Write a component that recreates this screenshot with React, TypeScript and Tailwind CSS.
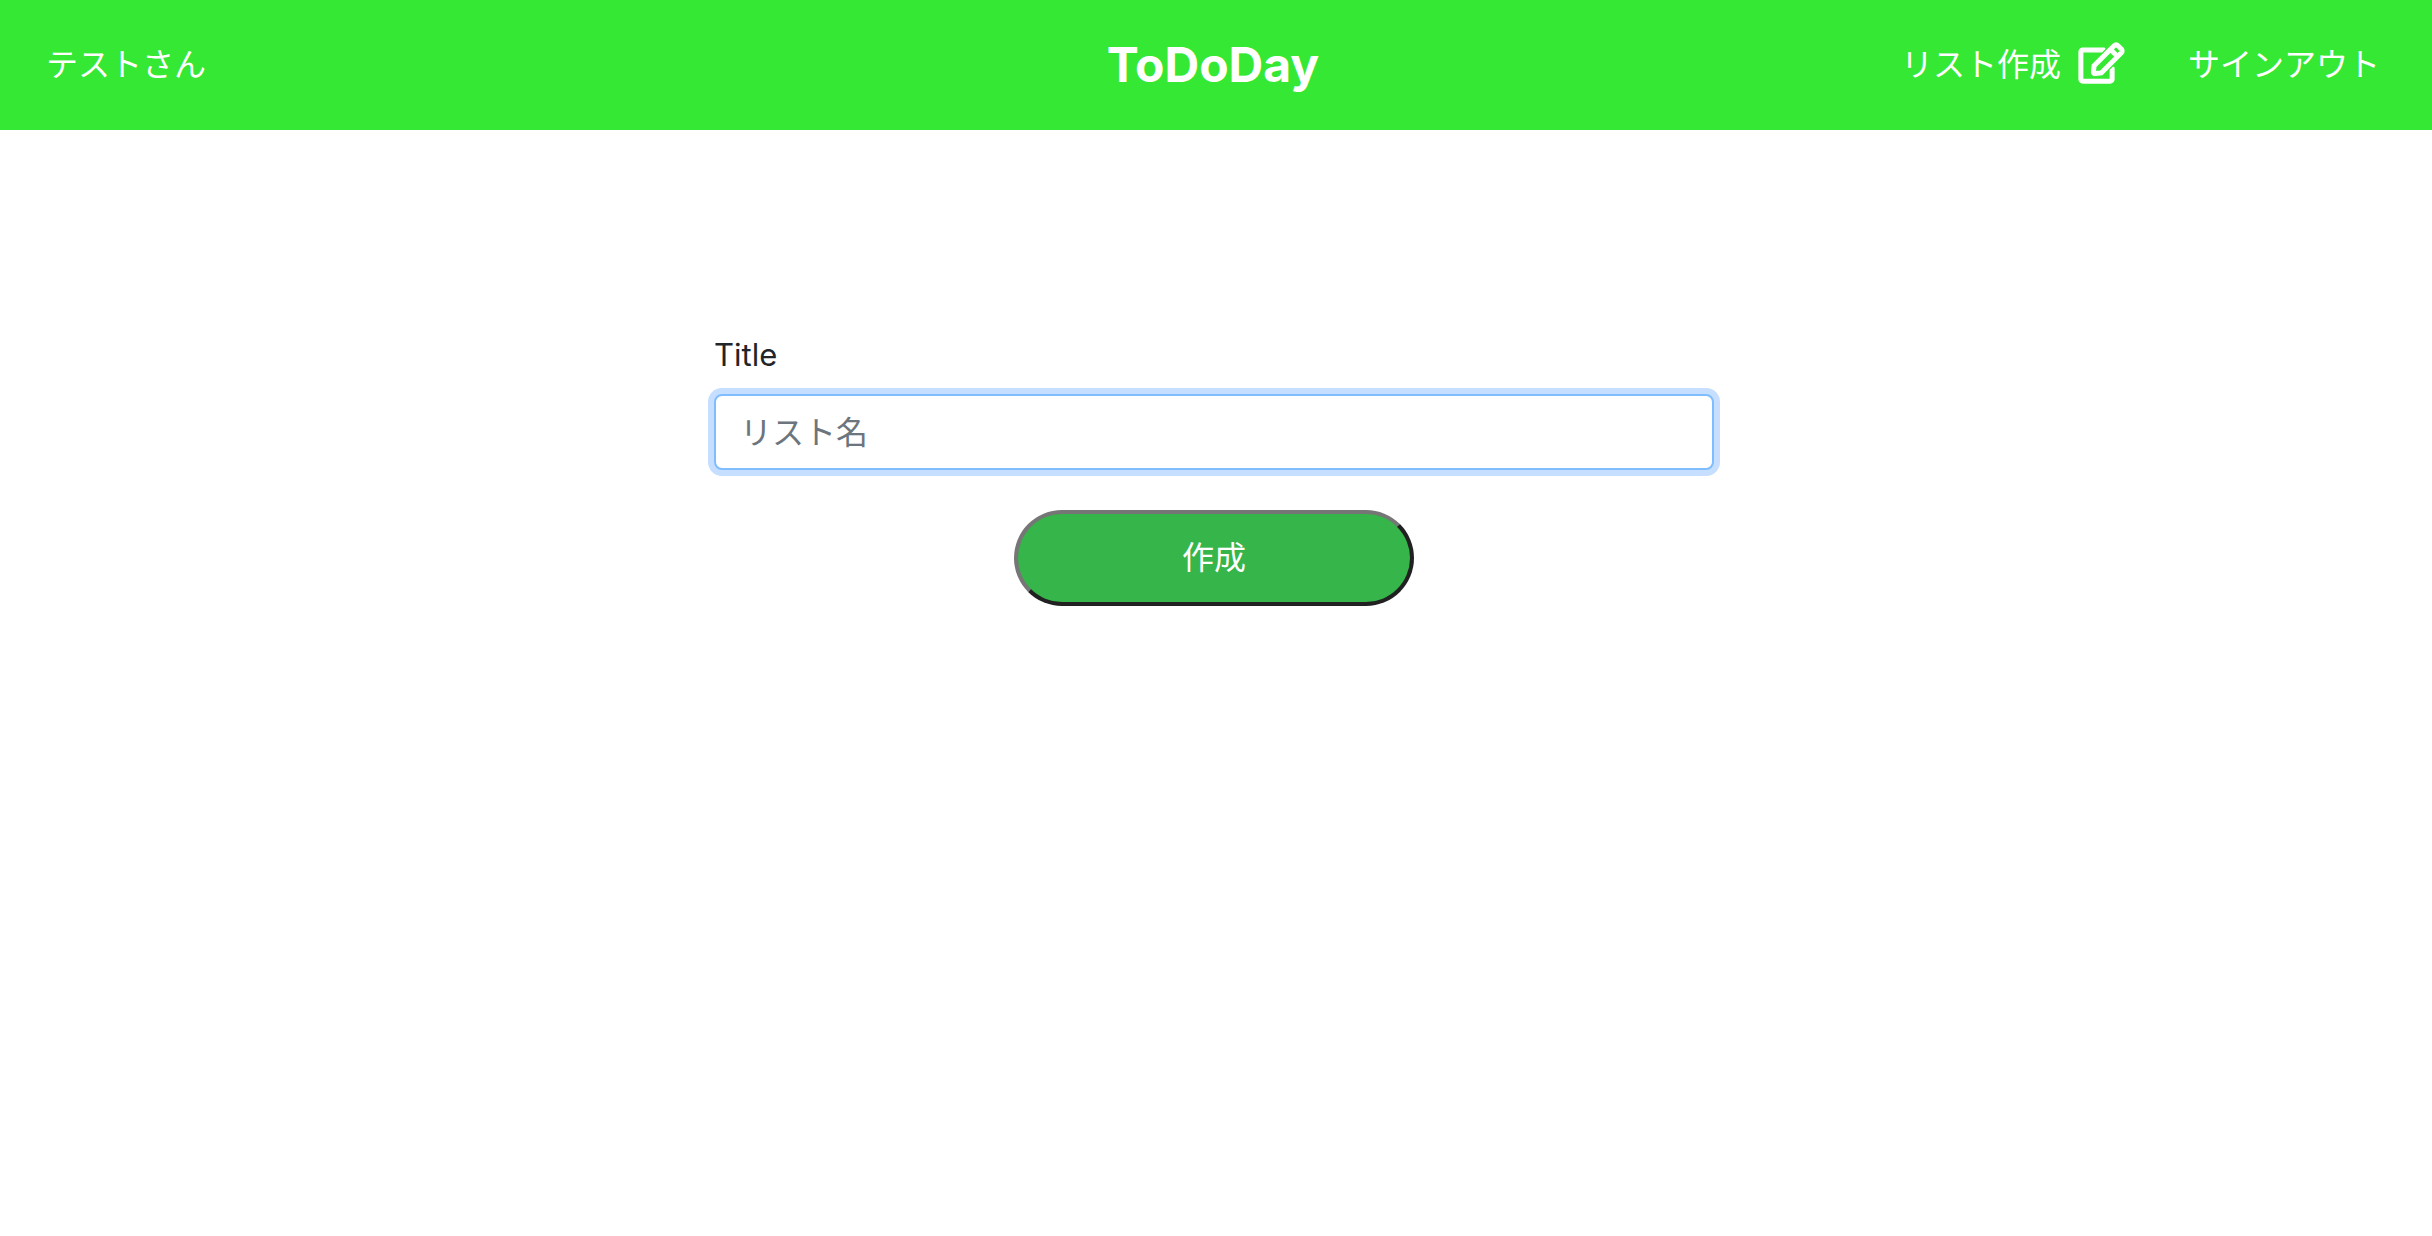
import React from "react";
import { FaRegEdit } from "react-icons/fa";

function Header() {
  return (
    <header className="grid h-[130px] grid-cols-[1fr_auto_1fr] items-center bg-[#35e833] pr-[52px] pl-[46px] text-[32px] leading-[48px] text-white">
      <a href="#" className="justify-self-start">テストさん</a>
      <h1 className="text-[48px] leading-[60px] font-bold">
        <a href="#">ToDoDay</a>
      </h1>
      <nav className="flex items-center gap-16 justify-self-end">
        <a href="#" className="flex items-center gap-[18px]">
          リスト作成
          <FaRegEdit className="mb-1 h-10 w-[45px] overflow-visible" strokeWidth={16} aria-hidden="true" />
        </a>
        <a href="#">サインアウト</a>
      </nav>
    </header>
  );
}

export default function App() {
  return (
    <div className="min-h-screen bg-white font-['Inter','Noto_Sans_CJK_JP',sans-serif] text-[#212529]">
      <Header />
      <main className="flex justify-center px-6 pt-[202px] pr-7">
        <form className="flex w-full max-w-[1000px] flex-col" onSubmit={(e) => e.preventDefault()}>
          <label htmlFor="title" className="mb-4 self-start text-[31px] leading-[46px]">
            Title
          </label>
          <input
            id="title"
            type="text"
            placeholder="リスト名"
            className="h-[76px] w-full rounded-lg border-2 border-[#80bdff] bg-white px-6 text-[32px] text-[#495057] ring-6 ring-[#c6deff] outline-none placeholder:text-[#6c757d]"
          />
          <button
            type="submit"
            className="mt-10 h-24 w-[400px] self-center rounded-full border-4 border-t-[#767676] border-r-[#212121] border-b-[#212121] border-l-[#767676] bg-[#35b54a] text-[32px] text-white"
          >
            作成
          </button>
        </form>
      </main>
    </div>
  );
}
